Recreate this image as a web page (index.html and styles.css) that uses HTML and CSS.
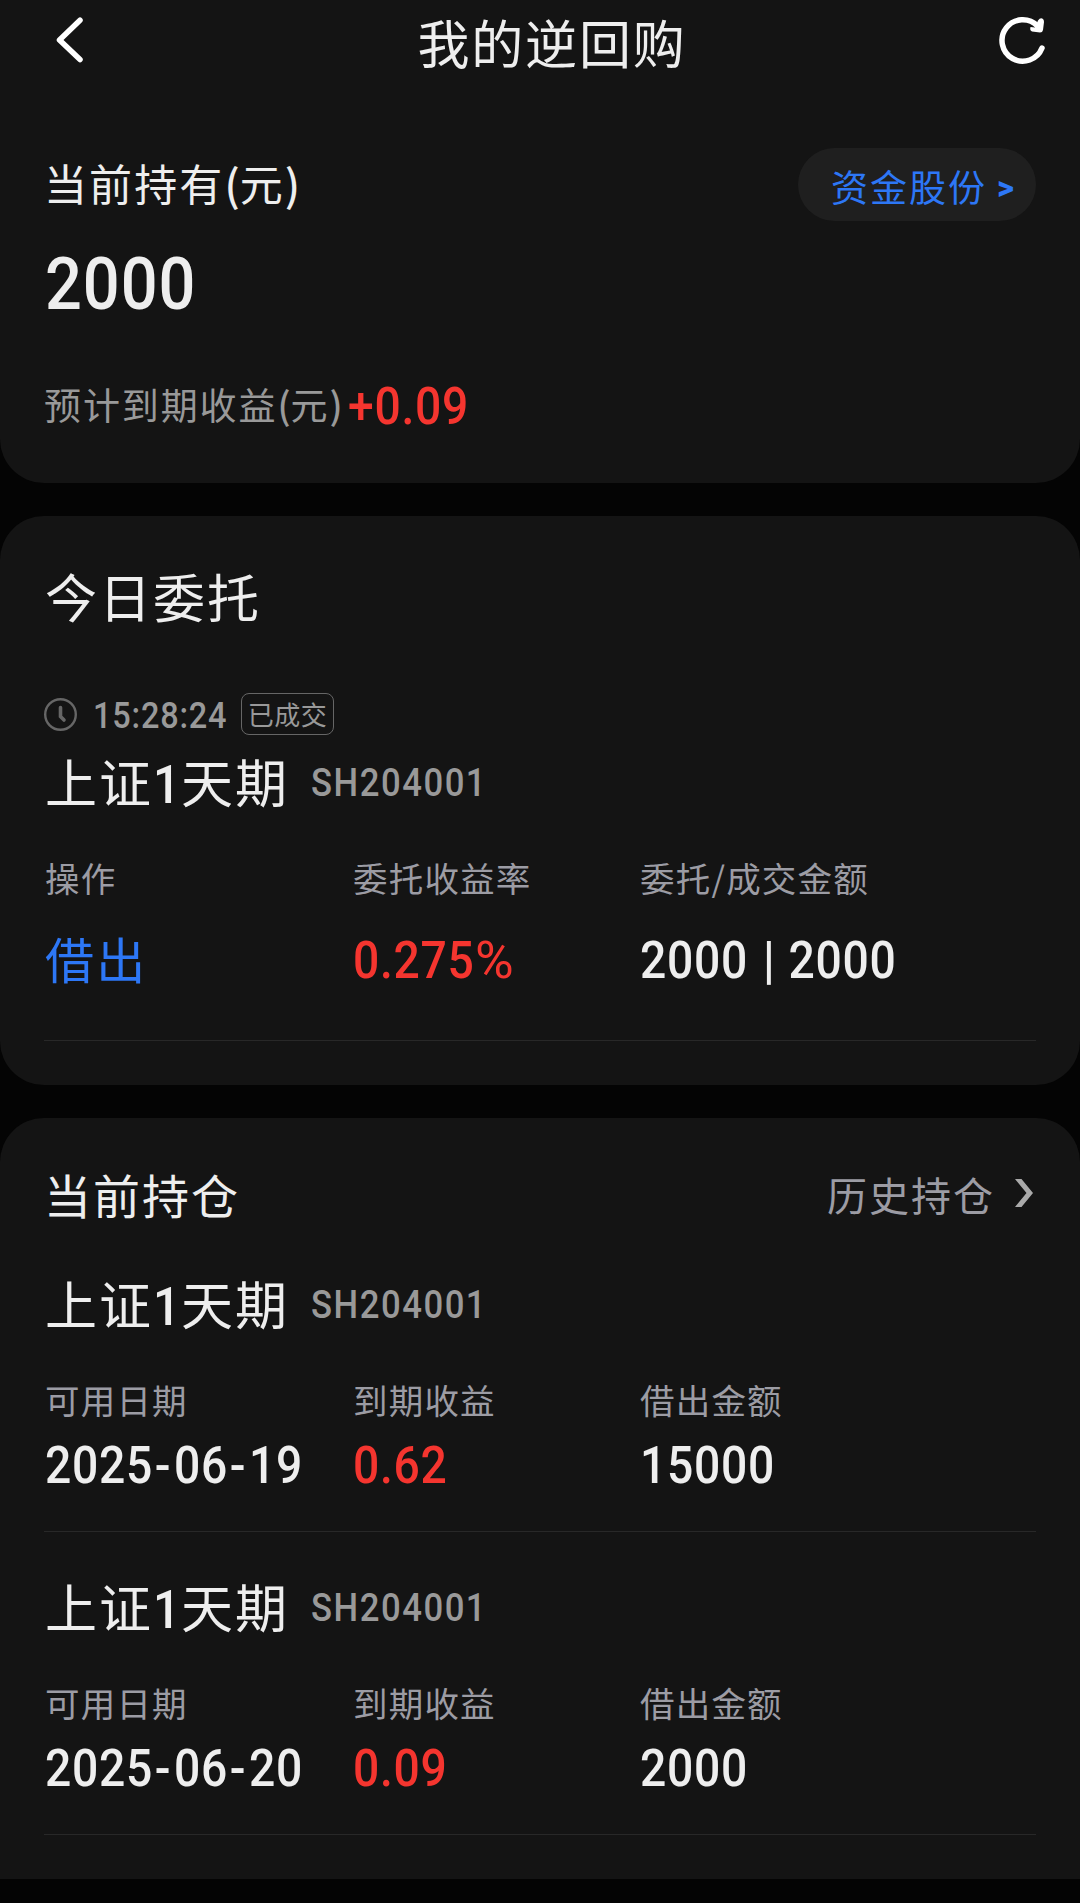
FILE: index.html
```html
<!DOCTYPE html>
<html lang="zh-CN">
<head>
<meta charset="utf-8">
<title>我的逆回购</title>
<link rel="stylesheet" href="styles.css">
</head>
<body>
<main class="page">
  <section class="card card-summary">
    <header class="topbar">
      <svg class="icon-back" viewBox="0 0 48 46"><path d="M23 2.200 2.500 22l20.500 19.600"/></svg>
      <h1 class="title">我的逆回购</h1>
      <svg class="icon-refresh" viewBox="0 0 46 48"><path d="M43 31A20.700 20.700 0 1 1 38.500 9"/><path class="head" d="M39 3.500Q41.500 0 44 2Q45 3 45 5L44 13Q43.500 15.500 41 15.500L33 14.500Q30.500 13.500 31.500 10L36 10.500Z"/></svg>
    </header>
    <div class="holding-row">
      <span class="holding-label">当前持有<i class="paren">(</i>元<i class="paren">)</i></span>
      <a class="pill">资金股份<span class="pill-arrow">&gt;</span></a>
    </div>
    <div class="holding-value"><span class="num num-xl">2000</span></div>
    <div class="income-row">
      <span class="income-label">预计到期收益<i class="paren">(</i>元<i class="paren">)</i></span>
      <span class="num red">+0.09</span>
    </div>
  </section>

  <section class="card card-orders">
    <h2 class="heading">今日委托</h2>
    <div class="time-row">
      <svg class="icon-clock" viewBox="0 0 33 33"><circle cx="16.500" cy="16.500" r="15.300"/><path d="M16.500 9.500V18.500L20 22"/></svg>
      <span class="num time">15:28:24</span>
      <span class="tag">已成交</span>
    </div>
    <div class="name-row"><span class="name">上证<b class="one">1</b>天期</span><span class="num code">SH204001</span></div>
    <div class="cols labels"><span>操作</span><span>委托收益率</span><span>委托<i class="slash">/</i>成交金额</span></div>
    <div class="cols values order-values"><span class="action">借出</span><span><span class="num red">0.275<i class="percent">%</i></span></span><span><span class="num">2000 <b class="bar">|</b> 2000</span></span></div>
    <hr class="divider order-divider">
  </section>

  <section class="card card-positions">
    <div class="positions-head">
      <h2 class="subheading">当前持仓</h2>
      <a class="history">历史持仓<svg class="icon-chevron" viewBox="0 0 18 30"><path d="M0 1H6.500L18 15 6.500 29H0L11.500 15Z"/></svg></a>
    </div>
    <article class="position">
      <div class="name-row"><span class="name">上证<b class="one">1</b>天期</span><span class="num code">SH204001</span></div>
      <div class="cols labels"><span>可用日期</span><span>到期收益</span><span>借出金额</span></div>
      <div class="cols values"><span><span class="num">2025<i class="dash">-</i>06<i class="dash">-</i>19</span></span><span><span class="num red">0.62</span></span><span><span class="num">15000</span></span></div>
      <hr class="divider">
    </article>
    <article class="position">
      <div class="name-row"><span class="name">上证<b class="one">1</b>天期</span><span class="num code">SH204001</span></div>
      <div class="cols labels"><span>可用日期</span><span>到期收益</span><span>借出金额</span></div>
      <div class="cols values"><span><span class="num">2025<i class="dash">-</i>06<i class="dash">-</i>20</span></span><span><span class="num red">0.09</span></span><span><span class="num">2000</span></span></div>
      <hr class="divider">
    </article>
  </section>
</main>
</body>
</html>
```
FILE: styles.css
```css
* { box-sizing: border-box; }

body {
  margin: 0;
  background: #040404;
  color: #eee;
  font-family: "Noto Sans CJK SC", sans-serif;
}

h1, h2 { margin: 0; font-weight: 400; }
i { font-style: normal; }
span, a, h1, h2 { white-space: nowrap; }

.page {
  display: flex;
  flex-direction: column;
  gap: 33px;
  width: 1080px;
  height: 1903px;
  overflow: hidden;
}

.card {
  flex: none;
  padding: 0 44px;
  background: #141414;
  border-radius: 44px;
}

.card-summary { height: 483px; border-radius: 0 0 44px 44px; }
.card-orders { height: 569px; padding-top: 50px; }
.card-positions { height: 761px; padding-top: 46px; border-radius: 44px 44px 0 0; }

/* Numerals: narrow, DIN-like proportions */
.num {
  display: inline-block;
  padding-top: 1px;
  font-family: Roboto, sans-serif;
  font-size: 52px;
  font-weight: 500;
  line-height: 60px;
  letter-spacing: .8px;
  transform: scaleX(.89);
  transform-origin: 0 50%;
}
.red { color: #f5352f; }
.dash { margin: 0 3px 0 2px; }
.percent { display: inline-block; font-weight: 400; transform: scaleX(1.14); transform-origin: 0 50%; }
.bar { margin: 0 1px 0 3px; font-weight: 700; }

/* Top bar */
.topbar {
  display: flex;
  justify-content: space-between;
  align-items: center;
  height: 81px;
  margin: 0 -9px 0 13px;
}
.title { padding-top: 2px; font-size: 52px; line-height: 79px; letter-spacing: 1.800px; }
.icon-back { width: 48px; height: 46px; fill: none; stroke: #fff; stroke-width: 5.500px; stroke-linecap: round; stroke-linejoin: round; overflow: visible; }
.icon-refresh { width: 46px; height: 48px; fill: none; stroke: #fff; stroke-width: 5.500px; stroke-linecap: round; overflow: visible; }
.icon-refresh .head { fill: #fff; stroke: none; }

/* Summary */
.holding-row {
  display: flex;
  justify-content: space-between;
  align-items: center;
  height: 73px;
  margin-top: 67px;
}
.holding-label { padding: 0 0 6px; font-size: 43px; line-height: 60px; letter-spacing: 2.100px; }
.paren { font-weight: 500; letter-spacing: 0; }
.pill {
  display: flex;
  align-items: center;
  width: 238px;
  height: 73px;
  padding: 2px 0 0 33px;
  border-radius: 37px;
  background: #1f1f1f;
  color: #2d77f6;
  font-size: 37px;
  letter-spacing: 2px;
}
.pill-arrow { margin: 4px 0 0 10px; font-family: Roboto, sans-serif; font-size: 33px; font-weight: 800; }
.holding-value { height: 74px; margin-top: 26px; padding-left: 1px; }
.num-xl { padding-top: 0; font-size: 73px; line-height: 74px; letter-spacing: 1px; }
.income-row { display: flex; align-items: center; height: 60px; margin-top: 55px; }
.income-label { width: 304px; padding: 0 0 4px; color: #999; font-size: 37px; line-height: 54px; letter-spacing: 1.900px; }

/* Orders */
.heading { padding-left: 1px; font-size: 52px; line-height: 60px; letter-spacing: 2px; }
.time-row { display: flex; align-items: center; height: 42px; margin-top: 67px; }
.icon-clock { width: 33px; height: 33px; fill: none; stroke: #666; stroke-width: 2.400px; stroke-linecap: round; }
.icon-clock path { stroke-width: 3.600px; }
.time { width: 148px; margin-left: 16px; padding-top: 4px; color: #999; font-size: 36.500px; line-height: 38px; letter-spacing: .9px; }
.tag {
  width: 93px;
  height: 42px;
  border: 1px solid #666;
  border-radius: 8px;
  color: #999;
  font-size: 26px;
  line-height: 39px;
  letter-spacing: .5px;
  text-align: center;
}
.name-row { display: flex; align-items: center; height: 60px; margin-top: 16px; }
.name { width: 267px; padding-left: 1px; font-size: 52px; line-height: 60px; letter-spacing: 2px; }
.one {
  display: inline-block;
  width: 28px;
  font: 500 54px/1 Roboto, sans-serif;
  letter-spacing: 0;
  transform: scaleX(.89);
  transform-origin: 0 50%;
}
.code { padding-top: 4px; color: #999; font-size: 39px; line-height: 56px; letter-spacing: 1.700px; }

.cols { display: grid; grid-template-columns: 308px 287px 1fr; padding-left: 1px; }
.labels { height: 40px; margin-top: 46px; color: #9c9ca4; font-size: 34.500px; line-height: 40px; letter-spacing: 1.200px; }
.values { height: 60px; margin-top: 16px; line-height: 60px; }
.order-values { margin-top: 33px; }
.action { color: #2d77f6; font-size: 49px; line-height: 56px; letter-spacing: 2.200px; }

.divider { height: 1px; margin: 36px 0 0; border: 0; background: #282828; }
.order-divider { margin-top: 50px; }

/* Positions */
.positions-head { display: flex; justify-content: space-between; align-items: center; height: 60px; }
.subheading { font-size: 47px; line-height: 60px; letter-spacing: 2px; }
.history { display: flex; align-items: center; padding-right: 3px; color: #9c9ca4; font-size: 40px; line-height: 60px; letter-spacing: 2px; }
.icon-chevron { width: 18px; height: 30px; margin: 0 0 2px 20px; fill: #aaa; }
.position .name-row { margin-top: 49px; }
.position + .position .name-row { margin-top: 44px; }
.position .labels { margin-top: 46px; }
```
